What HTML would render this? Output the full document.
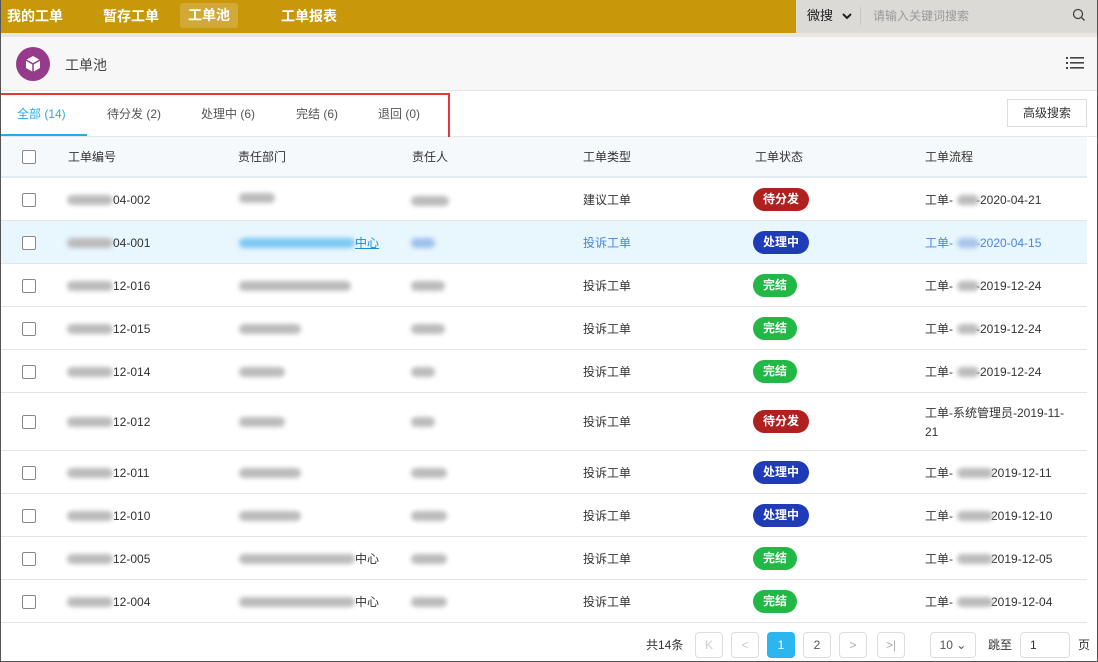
<!DOCTYPE html>
<html><head><meta charset="utf-8"><style>
*{margin:0;padding:0;box-sizing:border-box}
body{width:1098px;height:662px;overflow:hidden;font-family:"Liberation Sans","Noto Sans CJK SC",sans-serif;font-size:13px;color:#333;background:#fff;position:relative}
.frame{position:absolute;inset:0;border:1px solid #555;border-top:none;pointer-events:none;z-index:9}
.top{position:absolute;left:0;top:0;width:1098px;height:37px;background:#e9e6e0}
.gold{position:absolute;left:0;top:0;width:796px;height:33px;background:#c9970a}
.top .it{position:absolute;top:0;height:33px;line-height:33px;color:#fff;font-size:14px;font-weight:bold}
.srch{position:absolute;left:796px;top:0;width:302px;height:33px;background:#dcdad6}
.hd{position:absolute;left:0;top:37px;width:1098px;height:54px;background:#f7f7f7;border-bottom:1px solid #e6e6e6}
.abs{position:absolute}
.tabs{position:absolute;left:0;top:91px;width:1098px;height:46px;border-bottom:1px solid #e8e8e8}
.tab{position:absolute;top:15px;font-size:12px;line-height:16px;color:#555}
.row{position:absolute;left:1px;width:1086px;border-bottom:1px solid #e4e4e4}
.cb{position:absolute;left:21px;width:14px;height:14px;border:1px solid #888;border-radius:2px;background:#fff}
.c{position:absolute;font-size:12px;line-height:16px;white-space:nowrap}
.bl{position:absolute;height:10px;border-radius:5px;background:#bbb;filter:blur(2.5px)}
.badge{position:absolute;left:752px;height:23px;line-height:23px;border-radius:12px;color:#fff;font-size:12px;font-weight:bold;padding:0 10px}
.pb{position:absolute;top:632px;height:26px;border:1px solid #ddd;border-radius:4px;text-align:center;line-height:24px;font-size:12px;color:#999;background:#fff}
</style></head><body>
<div class="top">
<div class="gold"></div>
<div class="it" style="left:7px">我的工单</div>
<div class="it" style="left:103px">暂存工单</div>
<div class="it" style="left:180px;width:58px;top:3px;height:25px;line-height:25px;background:rgba(255,255,255,.18);border-radius:3px;text-align:center">工单池</div>
<div class="it" style="left:281px">工单报表</div>
<div class="srch">
<div class="abs" style="left:11px;top:8px;font-size:13px;line-height:16px;color:#222">微搜</div>
<svg class="abs" style="left:46px;top:13px" width="10" height="7"><path d="M1 1l4 4 4-4" stroke="#222" stroke-width="2" fill="none"/></svg>
<div class="abs" style="left:64px;top:7px;width:1px;height:18px;background:#c8c8c8"></div>
<div class="abs" style="left:77px;top:8px;font-size:12px;line-height:16px;color:#999">请输入关键词搜索</div>
<svg class="abs" style="left:276px;top:8px" width="14" height="14"><circle cx="6" cy="6" r="4.5" stroke="#444" stroke-width="1.3" fill="none"/><path d="M9.5 9.5l3 3" stroke="#444" stroke-width="1.4"/></svg>
</div>
</div>
<div class="hd">
<div class="abs" style="left:16px;top:10px;width:34px;height:34px;border-radius:50%;background:#963a8c"></div>
<svg class="abs" style="left:23px;top:17px" width="20" height="20" viewBox="0 0 20 20"><path d="M10 2l7 4v8l-7 4-7-4V6z" fill="#fff"/><path d="M3 6l7 4 7-4M10 10v8" stroke="#963a8c" stroke-width="1.5" fill="none"/></svg>
<div class="abs" style="left:65px;top:19px;font-size:14px;line-height:18px;color:#444">工单池</div>
<svg class="abs" style="left:1066px;top:19px" width="18" height="15"><g fill="#444"><rect x="0" y="1" width="2" height="2"/><rect x="0" y="6" width="2" height="2"/><rect x="0" y="11" width="2" height="2"/><rect x="4" y="1" width="14" height="1.6"/><rect x="4" y="6" width="14" height="1.6"/><rect x="4" y="11" width="14" height="1.6"/></g></svg>
</div>
<div class="tabs">
<div class="tab" style="left:17px;color:#29a9e6">全部 (14)</div>
<div class="abs" style="left:0;top:43px;width:87px;height:2px;background:#29a9e6"></div>
<div class="tab" style="left:107px">待分发 (2)</div>
<div class="tab" style="left:201px">处理中 (6)</div>
<div class="tab" style="left:296px">完结 (6)</div>
<div class="tab" style="left:378px">退回 (0)</div>
<div class="abs" style="left:0;top:2px;width:450px;height:51px;border:2px solid #e8363a;border-left:none"></div>
<div class="abs" style="left:1007px;top:8px;width:80px;height:28px;border:1px solid #ddd;text-align:center;line-height:26px;font-size:12px;color:#333">高级搜索</div>
</div>
<div class="row" style="top:137px;height:41px;background:#f5f9fc;border-bottom:2px solid #e3ebf2">
<div class="cb" style="top:13px"></div>
<div class="c" style="left:67px;top:12px">工单编号</div><div class="c" style="left:237px;top:12px">责任部门</div><div class="c" style="left:411px;top:12px">责任人</div><div class="c" style="left:582px;top:12px">工单类型</div><div class="c" style="left:754px;top:12px">工单状态</div><div class="c" style="left:924px;top:12px">工单流程</div>
</div>

<div class="row" style="top:178px;height:43px"><div class="cb" style="top:15px"></div><div class="bl" style="left:66px;top:17px;width:46px"></div><div class="c" style="left:112px;top:14px">04-002</div><div class="bl" style="left:238px;top:15px;width:36px"></div><div class="bl" style="left:410px;top:18px;width:38px"></div><div class="c" style="left:582px;top:14px">建议工单</div><div class="badge" style="top:10px;background:#b0201f">待分发</div><div class="c" style="left:924px;top:14px">工单-<span style="display:inline-block;width:23px"></span>-2020-04-21</div><div class="bl" style="left:956px;top:17px;width:22px"></div></div>
<div class="row" style="top:221px;height:43px;background:#e8f6fe"><div class="cb" style="top:15px"></div><div class="bl" style="left:66px;top:17px;width:46px"></div><div class="c" style="left:112px;top:14px">04-001</div><div class="bl" style="left:238px;top:17px;width:116px;background:#7dc8f5"></div><div class="c" style="left:354px;top:14px;color:#1a8fe0;text-decoration:underline">中心</div><div class="bl" style="left:410px;top:17px;width:24px;background:#9ec0ec"></div><div class="c" style="left:582px;top:14px;color:#4a86d8">投诉工单</div><div class="badge" style="top:10px;background:#1f3bb8">处理中</div><div class="c" style="left:924px;top:14px;color:#4a86d8">工单-<span style="display:inline-block;width:23px"></span>-2020-04-15</div><div class="bl" style="left:956px;top:17px;width:22px;background:#a8c4ec"></div></div>
<div class="row" style="top:264px;height:43px"><div class="cb" style="top:15px"></div><div class="bl" style="left:66px;top:17px;width:46px"></div><div class="c" style="left:112px;top:14px">12-016</div><div class="bl" style="left:238px;top:17px;width:112px"></div><div class="bl" style="left:410px;top:17px;width:34px"></div><div class="c" style="left:582px;top:14px">投诉工单</div><div class="badge" style="top:10px;background:#21b845">完结</div><div class="c" style="left:924px;top:14px">工单-<span style="display:inline-block;width:23px"></span>-2019-12-24</div><div class="bl" style="left:956px;top:17px;width:22px"></div></div>
<div class="row" style="top:307px;height:43px"><div class="cb" style="top:15px"></div><div class="bl" style="left:66px;top:17px;width:46px"></div><div class="c" style="left:112px;top:14px">12-015</div><div class="bl" style="left:238px;top:17px;width:62px"></div><div class="bl" style="left:410px;top:17px;width:34px"></div><div class="c" style="left:582px;top:14px">投诉工单</div><div class="badge" style="top:10px;background:#21b845">完结</div><div class="c" style="left:924px;top:14px">工单-<span style="display:inline-block;width:23px"></span>-2019-12-24</div><div class="bl" style="left:956px;top:17px;width:22px"></div></div>
<div class="row" style="top:350px;height:43px"><div class="cb" style="top:15px"></div><div class="bl" style="left:66px;top:17px;width:46px"></div><div class="c" style="left:112px;top:14px">12-014</div><div class="bl" style="left:238px;top:17px;width:46px"></div><div class="bl" style="left:410px;top:17px;width:24px"></div><div class="c" style="left:582px;top:14px">投诉工单</div><div class="badge" style="top:10px;background:#21b845">完结</div><div class="c" style="left:924px;top:14px">工单-<span style="display:inline-block;width:23px"></span>-2019-12-24</div><div class="bl" style="left:956px;top:17px;width:22px"></div></div>
<div class="row" style="top:393px;height:58px"><div class="cb" style="top:22px"></div><div class="bl" style="left:66px;top:24px;width:46px"></div><div class="c" style="left:112px;top:21px">12-012</div><div class="bl" style="left:238px;top:24px;width:46px"></div><div class="bl" style="left:410px;top:24px;width:24px"></div><div class="c" style="left:582px;top:21px">投诉工单</div><div class="badge" style="top:17px;background:#b0201f">待分发</div><div class="c" style="left:924px;top:11px;line-height:19px">工单-系统管理员-2019-11-<br>21</div></div>
<div class="row" style="top:451px;height:43px"><div class="cb" style="top:15px"></div><div class="bl" style="left:66px;top:17px;width:46px"></div><div class="c" style="left:112px;top:14px">12-011</div><div class="bl" style="left:238px;top:17px;width:62px"></div><div class="bl" style="left:410px;top:17px;width:36px"></div><div class="c" style="left:582px;top:14px">投诉工单</div><div class="badge" style="top:10px;background:#1f3bb8">处理中</div><div class="c" style="left:924px;top:14px">工单-<span style="display:inline-block;width:38px"></span>2019-12-11</div><div class="bl" style="left:956px;top:17px;width:36px"></div></div>
<div class="row" style="top:494px;height:43px"><div class="cb" style="top:15px"></div><div class="bl" style="left:66px;top:17px;width:46px"></div><div class="c" style="left:112px;top:14px">12-010</div><div class="bl" style="left:238px;top:17px;width:62px"></div><div class="bl" style="left:410px;top:17px;width:36px"></div><div class="c" style="left:582px;top:14px">投诉工单</div><div class="badge" style="top:10px;background:#1f3bb8">处理中</div><div class="c" style="left:924px;top:14px">工单-<span style="display:inline-block;width:38px"></span>2019-12-10</div><div class="bl" style="left:956px;top:17px;width:36px"></div></div>
<div class="row" style="top:537px;height:43px"><div class="cb" style="top:15px"></div><div class="bl" style="left:66px;top:17px;width:46px"></div><div class="c" style="left:112px;top:14px">12-005</div><div class="bl" style="left:238px;top:17px;width:116px"></div><div class="c" style="left:354px;top:14px">中心</div><div class="bl" style="left:410px;top:17px;width:36px"></div><div class="c" style="left:582px;top:14px">投诉工单</div><div class="badge" style="top:10px;background:#21b845">完结</div><div class="c" style="left:924px;top:14px">工单-<span style="display:inline-block;width:38px"></span>2019-12-05</div><div class="bl" style="left:956px;top:17px;width:36px"></div></div>
<div class="row" style="top:580px;height:43px"><div class="cb" style="top:15px"></div><div class="bl" style="left:66px;top:17px;width:46px"></div><div class="c" style="left:112px;top:14px">12-004</div><div class="bl" style="left:238px;top:17px;width:116px"></div><div class="c" style="left:354px;top:14px">中心</div><div class="bl" style="left:410px;top:17px;width:36px"></div><div class="c" style="left:582px;top:14px">投诉工单</div><div class="badge" style="top:10px;background:#21b845">完结</div><div class="c" style="left:924px;top:14px">工单-<span style="display:inline-block;width:38px"></span>2019-12-04</div><div class="bl" style="left:956px;top:17px;width:36px"></div></div>

<div class="c" style="left:646px;top:637px;color:#333">共14条</div>
<div class="pb" style="left:695px;width:28px;color:#ccc">K</div>
<div class="pb" style="left:731px;width:28px;color:#ccc">&lt;</div>
<div class="pb" style="left:767px;width:28px;background:#2bb6f2;border-color:#2bb6f2;color:#fff">1</div>
<div class="pb" style="left:803px;width:28px;color:#555">2</div>
<div class="pb" style="left:839px;width:28px;color:#aaa">&gt;</div>
<div class="pb" style="left:877px;width:28px;color:#aaa">&gt;|</div>
<div class="pb" style="left:930px;width:46px;color:#555">10 ⌄</div>
<div class="c" style="left:988px;top:637px">跳至</div>
<div class="pb" style="left:1020px;width:50px;color:#333;text-align:left;padding-left:9px">1</div>
<div class="c" style="left:1078px;top:637px">页</div>
<div class="frame"></div>
</body></html>
